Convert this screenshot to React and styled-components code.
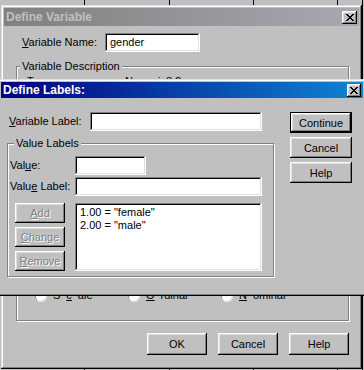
import React from 'react';
import styled, { createGlobalStyle, css } from 'styled-components';

const GlobalStyle = createGlobalStyle`
  html, body {
    margin: 0;
    padding: 0;
    background: #c0c0c0;
  }
  body {
    font-family: "Liberation Sans", Arial, sans-serif;
    font-size: 11px;
    color: #000;
  }
  * {
    box-sizing: border-box;
  }
`;

const raised = css`
  box-shadow: inset -1px -1px #000, inset 1px 1px #fff, inset -2px -2px #808080, inset 2px 2px #dfdfdf;
`;

const sunken = css`
  box-shadow: inset -1px -1px #fff, inset 1px 1px #808080, inset -2px -2px #dfdfdf, inset 2px 2px #000;
`;

const Desktop = styled.div`
  position: relative;
  width: 364px;
  height: 370px;
  overflow: hidden;
  background: #c0c0c0;
`;

const Sheet = styled.div`
  display: flex;
  height: 100%;
`;

const SheetCol = styled.div`
  flex: 0 0 ${p => p.$w}px;
  border-right: 1px solid #000;
`;

const Window = styled.div`
  position: absolute;
  left: ${p => p.$x}px;
  top: ${p => p.$y}px;
  width: ${p => p.$w}px;
  height: ${p => p.$h}px;
  padding: 3px;
  display: flex;
  flex-direction: column;
  background: #c0c0c0;
  box-shadow: inset -1px -1px #000, inset 1px 1px #dfdfdf, inset -2px -2px #808080, inset 2px 2px #fff;
`;

const TitleBar = styled.div`
  flex: 0 0 ${p => p.$h}px;
  display: flex;
  align-items: center;
  justify-content: space-between;
  padding: 0 2px 0 ${p => p.$pl}px;
  font-size: 12px;
  font-weight: bold;
  white-space: nowrap;
  color: ${p => (p.$active ? '#fff' : '#c0c0c0')};
  background: ${p => (p.$active
    ? 'linear-gradient(90deg, #000080, #1084d0)'
    : 'linear-gradient(90deg, #808080, #a8a8b0)')};
`;

const CloseButton = styled.div`
  width: ${p => p.$w}px;
  height: ${p => p.$h}px;
  display: flex;
  align-items: center;
  justify-content: center;
  background: #c0c0c0;
  ${raised};
`;

const BgBody = styled.div`
  flex: 1;
  display: flex;
  flex-direction: column;
  padding: 7px 10px 0 12px;
`;

const FgBody = styled.div`
  flex: 1;
  display: flex;
  gap: 16px;
  padding: 14px 0 0 6px;
`;

const Row = styled.div`
  display: flex;
  align-items: center;
  margin-top: ${p => p.$mt || 0}px;
  padding-left: ${p => p.$pl || 0}px;
`;

const Label = styled.span`
  flex: 0 0 ${p => p.$w}px;
  line-height: 13px;
  white-space: nowrap;
`;

const Field = styled.div`
  width: ${p => p.$w}px;
  height: ${p => p.$h || 19}px;
  padding: 3px 5px;
  line-height: 13px;
  background: #fff;
  white-space: nowrap;
  ${sunken};
`;

const Group = styled.div`
  display: flex;
  flex-direction: column;
  width: ${p => p.$w}px;
  height: ${p => p.$h}px;
  margin-top: ${p => p.$mt}px;
  border: 1px solid #808080;
  box-shadow: inset 1px 1px #fff, 1px 1px #fff;
`;

const Legend = styled.span`
  align-self: flex-start;
  margin: -7px 0 0 ${p => p.$ml}px;
  padding: 0 2px;
  line-height: 13px;
  background: #c0c0c0;
`;

const Button = styled.button`
  width: ${p => p.$w}px;
  height: ${p => p.$h}px;
  padding: 0;
  border: none;
  background: #c0c0c0;
  font: inherit;
  color: #000;
  ${raised};

  ${p => p.$default && css`
    box-shadow: inset 0 0 0 1px #000, inset -2px -2px #000, inset 2px 2px #fff, inset -3px -3px #808080, inset 3px 3px #dfdfdf;
  `}

  &:disabled {
    color: #808080;
    text-shadow: 1px 1px 0 #fff;
  }
`;

const MainCol = styled.div`
  display: flex;
  flex-direction: column;
  width: 267px;
`;

const SideCol = styled.div`
  display: flex;
  flex-direction: column;
  gap: 4px;
`;

const ListArea = styled.div`
  display: flex;
  gap: 10px;
  margin-top: 7px;
  padding-left: 7px;
`;

const ButtonStack = styled.div`
  display: flex;
  flex-direction: column;
  gap: 4px;
`;

const ListBox = styled.div`
  width: 187px;
  height: 68px;
  padding: 3px 5px;
  line-height: 13px;
  background: #fff;
  ${sunken};
`;

const MeasureRow = styled.div`
  display: flex;
  margin-top: auto;
  margin-bottom: 18px;
  padding-left: 18px;
`;

const RadioItem = styled.div`
  flex: 0 0 93px;
  display: flex;
  align-items: center;
  gap: 6px;
  line-height: 13px;
`;

const Radio = styled.span`
  width: 12px;
  height: 12px;
  border-radius: 50%;
  background: #fff;
  box-shadow: inset 1px 1px #808080, inset -1px -1px #dfdfdf;
`;

const Footer = styled.div`
  display: flex;
  justify-content: flex-end;
  gap: 11px;
  margin-top: 12px;
`;

const U = styled.span`
  text-decoration: underline;
`;

const CloseIcon = () => (
  <svg width="8" height="7" viewBox="0 0 8 7" shapeRendering="crispEdges">
    <path
      fill="#000"
      d="M0 0h2v1h1v1h2V1h1V0h2v1H7v1H6v1H5v1h1v1h1v1h1v1H6V6H5V5H3v1H2v1H0V6h1V5h1V4h1V3H2V2H1V1H0z"
    />
  </svg>
);

const labels = ['1.00 = "female"', '2.00 = "male"'];

export default function App() {
  return (
    <>
      <GlobalStyle />
      <Desktop>
        <Sheet>
          <SheetCol $w={85} />
          <SheetCol $w={85} />
          <SheetCol $w={84} />
          <SheetCol $w={84} />
          <SheetCol $w={25} />
        </Sheet>

        <Window $x={1} $y={5} $w={361} $h={364}>
          <TitleBar $h={18} $pl={2}>
            Define Variable
            <CloseButton $w={15} $h={13}><CloseIcon /></CloseButton>
          </TitleBar>
          <BgBody>
            <Row $pl={6}>
              <Label $w={83}><U>V</U>ariable Name:</Label>
              <Field $w={95}>gender</Field>
            </Row>
            <Group $w={333} $h={255} $mt={14}>
              <Legend $ml={3}>Variable Description</Legend>
              <Row $mt={2} $pl={10}>
                <Label $w={98}>Type:</Label>
                <Label $w={80}>Numeric8.2</Label>
              </Row>
              <MeasureRow>
                <RadioItem><Radio />S<U>c</U>ale</RadioItem>
                <RadioItem><Radio /><U>O</U>rdinal</RadioItem>
                <RadioItem><Radio /><U>N</U>ominal</RadioItem>
              </MeasureRow>
            </Group>
            <Footer>
              <Button $w={60} $h={22}>OK</Button>
              <Button $w={60} $h={22}>Cancel</Button>
              <Button $w={60} $h={22}>Help</Button>
            </Footer>
          </BgBody>
        </Window>

        <Window $x={-2} $y={79} $w={368} $h={217}>
          <TitleBar $h={16} $pl={2} $active>
            Define Labels:
            <CloseButton $w={14} $h={13}><CloseIcon /></CloseButton>
          </TitleBar>
          <FgBody>
            <MainCol>
              <Row $pl={2}>
                <Label $w={81}><U>V</U>ariable Label:</Label>
                <Field $w={172} />
              </Row>
              <Group $w={267} $h={134} $mt={12}>
                <Legend $ml={6}>Value Labels</Legend>
                <Row $mt={6} $pl={2}>
                  <Label $w={65}>Val<U>u</U>e:</Label>
                  <Field $w={71} />
                </Row>
                <Row $mt={2} $pl={2}>
                  <Label $w={65}>Valu<U>e</U> Label:</Label>
                  <Field $w={187} />
                </Row>
                <ListArea>
                  <ButtonStack>
                    <Button $w={50} $h={20} disabled><U>A</U>dd</Button>
                    <Button $w={50} $h={20} disabled><U>C</U>hange</Button>
                    <Button $w={50} $h={20} disabled><U>R</U>emove</Button>
                  </ButtonStack>
                  <ListBox>
                    {labels.map(l => <div key={l}>{l}</div>)}
                  </ListBox>
                </ListArea>
              </Group>
            </MainCol>
            <SideCol>
              <Button $w={62} $h={21} $default>Continue</Button>
              <Button $w={62} $h={21}>Cancel</Button>
              <Button $w={62} $h={21}>Help</Button>
            </SideCol>
          </FgBody>
        </Window>
      </Desktop>
    </>
  );
}
